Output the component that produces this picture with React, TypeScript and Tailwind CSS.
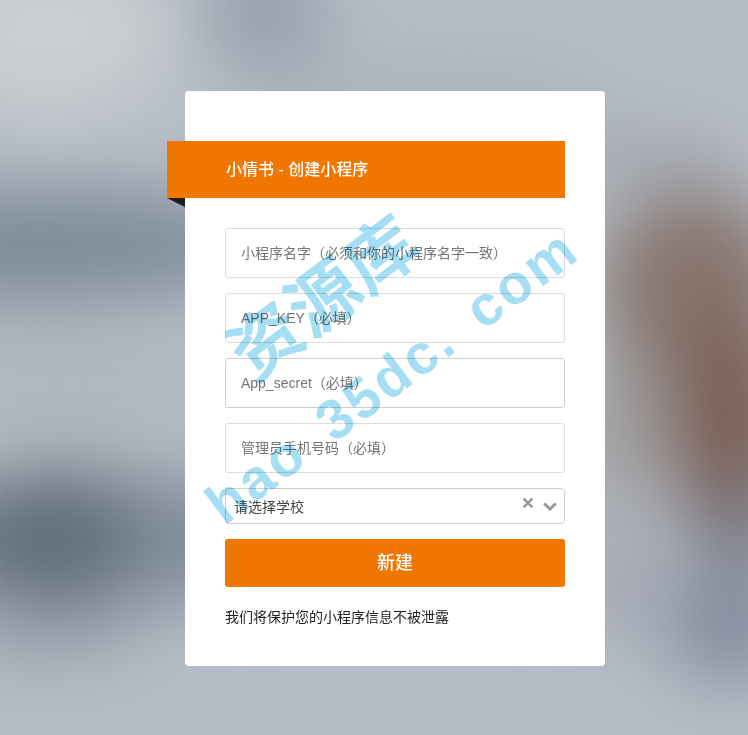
import React from 'react'

const fields = ['小程序名字（必须和你的小程序名字一致）', 'APP_KEY（必填）', 'App_secret（必填）', '管理员手机号码（必填）']

// blurred photo behind the card
const Backdrop: React.FC = () => (
  <svg className="absolute inset-0" width="748" height="735" viewBox="0 0 748 735">
    <defs>
      <filter id="soft" filterUnits="userSpaceOnUse" x="-200" y="-200" width="1148" height="1135">
        <feGaussianBlur stdDeviation="36" />
      </filter>
    </defs>
    <rect width="748" height="735" fill="#b6bdc6" />
    <g filter="url(#soft)">
      <ellipse cx="50" cy="30" rx="120" ry="85" fill="#cbcfd2" />
      <ellipse cx="265" cy="10" rx="65" ry="55" fill="#939faa" />
      <ellipse cx="420" cy="100" rx="190" ry="30" fill="#a6aeb7" />
      <ellipse cx="40" cy="245" rx="230" ry="55" fill="#7c8997" />
      <ellipse cx="70" cy="385" rx="170" ry="45" fill="#aeb5bc" />
      <ellipse cx="60" cy="540" rx="125" ry="72" fill="#626e7b" />
      <ellipse cx="195" cy="540" rx="70" ry="65" fill="#808c99" />
      <ellipse cx="30" cy="640" rx="130" ry="25" fill="#9ca6b0" />
      <ellipse cx="640" cy="160" rx="100" ry="25" fill="#a0a4ab" />
      <ellipse cx="695" cy="285" rx="95" ry="95" fill="#87756d" />
      <ellipse cx="620" cy="425" rx="30" ry="90" fill="#989493" />
      <ellipse cx="730" cy="420" rx="65" ry="110" fill="#7a5f55" />
      <ellipse cx="740" cy="525" rx="55" ry="40" fill="#74727a" />
      <ellipse cx="730" cy="625" rx="65" ry="55" fill="#7f8a9b" />
      <ellipse cx="620" cy="580" rx="40" ry="60" fill="#a0a5b0" />
    </g>
  </svg>
)

const App: React.FC = () => {
  return (
    <div
      className="relative h-[735px] w-full overflow-hidden pt-[91px]"
      style={{ fontFamily: '"Liberation Sans", "Noto Sans CJK SC", sans-serif' }}
    >
      <Backdrop />

      <div className="relative ml-[185px] h-[575px] w-[420px] rounded bg-white px-10 pt-[50px]">
        <div className="relative -ml-[58px] flex h-[57px] items-center bg-[#ef7600] pl-[59px] text-base font-medium text-white">
          小情书 - 创建小程序
          <div className="absolute left-0 top-full h-0 w-0 border-l-[18px] border-t-[9px] border-l-transparent border-t-[#1c1c1c]" />
        </div>

        <form className="mt-[30px] flex flex-col gap-[15px]">
          {fields.map((f, i) => (
            <input
              key={f}
              placeholder={f}
              className={`h-[50px] w-full rounded-[3px] border bg-transparent px-[15px] text-sm outline-none placeholder:text-[#757575] ${i === 2 ? 'border-[#cecece]' : 'border-[#dcdcdc]'}`}
            />
          ))}

          <div className="flex h-9 items-center justify-between rounded-[4px] border border-[#cecece] pl-2 pr-[7px] pt-px text-sm text-[#444]">
            <span>请选择学校</span>
            <div className="flex items-center gap-[10px]">
              <svg width="10" height="10" viewBox="0 0 10 10" className="mb-2">
                <path d="M0.5 0.5 L9.5 9.5 M9.5 0.5 L0.5 9.5" stroke="#999" strokeWidth="2.6" fill="none" />
              </svg>
              <svg width="14" height="9" viewBox="0 0 14 9">
                <polyline points="1.2,1.5 7,7 12.8,1.5" stroke="#999" strokeWidth="3" fill="none" />
              </svg>
            </div>
          </div>

          <button type="button" className="h-12 w-full rounded-[3px] bg-[#ef7600] text-lg font-medium text-white">
            新建
          </button>
        </form>

        <p className="mt-[20px] text-sm leading-5 text-[#222]">我们将保护您的小程序信息不被泄露</p>
      </div>

      {/* watermark */}
      <div className="pointer-events-none absolute left-[175px] top-[263px] flex h-[70px] w-[300px] -rotate-[37deg] items-center justify-center whitespace-nowrap text-[70px] leading-none font-medium tracking-[2px] text-[#a6dff3] [-webkit-text-stroke:1.5px_#a6dff3] mix-blend-multiply">
        资源库
      </div>
      <div className="pointer-events-none absolute left-[142px] top-[346px] flex h-[60px] w-[500px] -rotate-[37deg] items-center justify-center whitespace-pre text-[56px] leading-none font-bold tracking-[3px] [word-spacing:10px] text-[#a6dff3] mix-blend-multiply">
        hao 35dc. com
      </div>
    </div>
  )
}

export default App
